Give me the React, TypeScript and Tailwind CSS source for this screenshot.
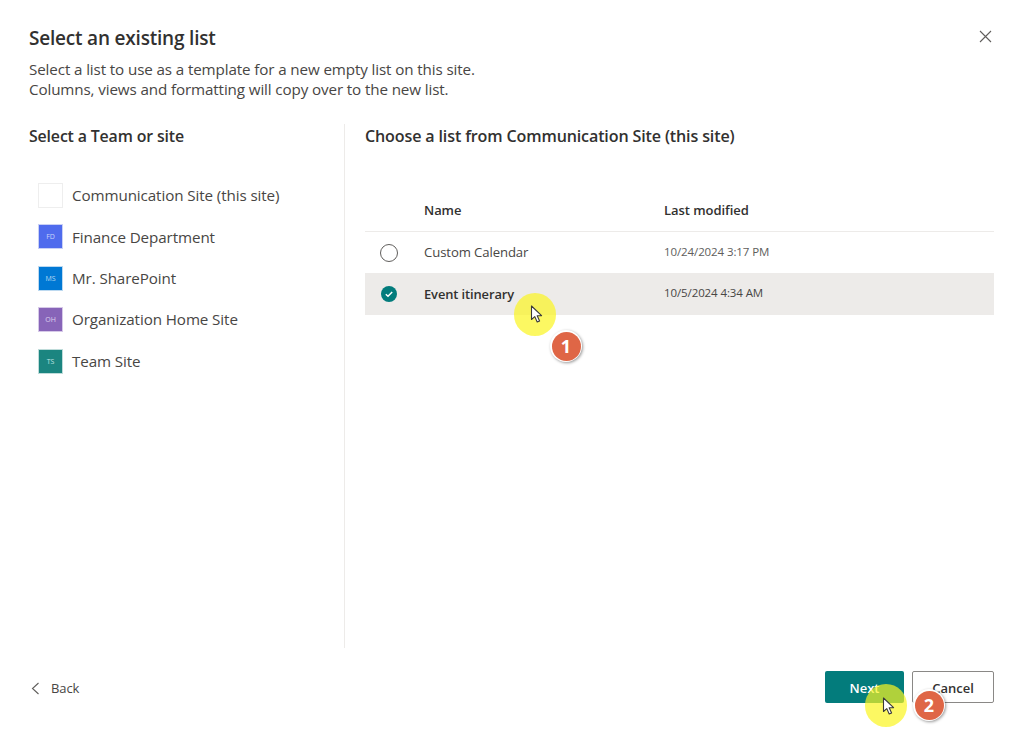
import React from "react";

const sites = [
  { name: "Communication Site (this site)", abbr: "", box: "bg-white border border-[#eeeeee]", text: "" },
  { name: "Finance Department", abbr: "FD", box: "bg-[#4f6bed] border border-[#c9d0f5]", text: "text-[#c9d3fb]" },
  { name: "Mr. SharePoint", abbr: "MS", box: "bg-[#0078d4] border border-[#bcd9f0]", text: "text-[#b5d8f3]" },
  { name: "Organization Home Site", abbr: "OH", box: "bg-[#8764b8] border border-[#d6c9e8]", text: "text-[#ddd0ee]" },
  { name: "Team Site", abbr: "TS", box: "bg-[#1b8580] border border-[#bfdcda]", text: "text-[#bfe3e0]" },
];

function Cursor() {
  return (
    <svg width="13" height="19" viewBox="0 0 13 19" className="block">
      <path d="M1.5 1 L1.5 14.5 L4.8 11.6 L7.2 17 L9.6 16 L7.2 10.8 L11.6 10.6 Z" fill="#ffffff" stroke="#3a3a3a" strokeWidth="1.1" strokeLinejoin="round" />
    </svg>
  );
}

function Badge({ n }: { n: string }) {
  return (
    <div className="w-[32px] h-[32px] rounded-full bg-white shadow-[1px_1px_3px_rgba(0,0,0,0.4)] flex items-center justify-center">
      <div className="w-[29px] h-[29px] rounded-full bg-[#df6646] flex items-center justify-center text-white text-[18px] font-bold font-['Open_Sans',sans-serif] leading-none">
        {n}
      </div>
    </div>
  );
}

export default function App() {
  return (
    <div className="relative w-[1024px] h-[731px] overflow-hidden bg-white flex flex-col font-['Open_Sans','Noto_Sans',sans-serif] text-[#323130]">
      <header className="relative h-[124px] shrink-0 pl-[29px] pt-[25px]">
        <h1 className="text-[19px] leading-[27px] font-semibold tracking-[-0.2px]">Select an existing list</h1>
        <p className="mt-[7px] text-[15.2px] leading-[20px] text-[#484644] tracking-[-0.12px]">
          Select a list to use as a template for a new empty list on this site.
          <br />
          Columns, views and formatting will copy over to the new list.
        </p>
        <button className="absolute left-[979px] top-[30px] text-[#605e5c]">
          <svg width="13" height="13" viewBox="0 0 13 13" className="block">
            <path d="M1 1 L12 12 M12 1 L1 12" stroke="#605e5c" strokeWidth="1.1" fill="none" />
          </svg>
        </button>
      </header>

      <main className="flex h-[524px] shrink-0">
        <section className="w-[316px] ml-[29px] shrink-0 border-r border-[#edebe9]">
          <h2 className="pt-[1px] text-[15.9px] leading-[22px] font-semibold tracking-[-0.15px]">Select a Team or site</h2>
          <ul className="mt-[36px] ml-[9px] flex flex-col gap-[16.45px]">
            {sites.map((s) => (
              <li key={s.name} className="flex items-center h-[25px]">
                <div className={`w-[25px] h-[25px] shrink-0 flex items-center justify-center ${s.box}`}>
                  <span className={`text-[7px] leading-none ${s.text}`}>{s.abbr}</span>
                </div>
                <span className="ml-[9px] text-[15.2px] tracking-[-0.1px] text-[#484644]">{s.name}</span>
              </li>
            ))}
          </ul>
        </section>

        <section className="ml-[20px] w-[629px] shrink-0">
          <h2 className="pt-[1px] text-[16.1px] leading-[22px] font-semibold tracking-[-0.15px]">
            Choose a list from Communication Site (this site)
          </h2>
          <div className="mt-[45px] h-[40px] pb-[1px] flex items-center border-b border-[#edebe9] text-[13px] font-semibold tracking-[-0.05px]">
            <span className="ml-[59px] w-[240px]">Name</span>
            <span>Last modified</span>
          </div>
          <div className="h-[41px] flex items-center">
            <span className="ml-[15px] w-[18px] h-[18px] rounded-full border border-[#605e5c] shrink-0" />
            <span className="ml-[26px] w-[240px] text-[13.15px] text-[#484644] tracking-[-0.1px]">Custom Calendar</span>
            <span className="pb-[2px] text-[11.5px] text-[#605e5c] tracking-[-0.1px]">10/24/2024 3:17 PM</span>
          </div>
          <div className="h-[42px] flex items-center bg-[#edebe9]">
            <span className="ml-[16px] w-[16px] h-[16px] rounded-full bg-[#037c7c] shrink-0 flex items-center justify-center">
              <svg width="10" height="10" viewBox="0 0 10 10" className="block">
                <path d="M1.8 5.2 L4 7.2 L8.2 3" stroke="#ffffff" strokeWidth="1.5" fill="none" />
              </svg>
            </span>
            <span className="ml-[27px] pt-[2px] w-[240px] text-[12.9px] font-semibold text-[#323130] tracking-[-0.1px]">Event itinerary</span>
            <span className="pb-[2px] text-[11.5px] text-[#484644] tracking-[-0.1px]">10/5/2024 4:34 AM</span>
          </div>
        </section>
      </main>

      <footer className="flex-1 flex items-start pl-[31px] pr-[30px] pt-[23px]">
        <div className="flex items-center h-[35px]">
          <svg width="9" height="13" viewBox="0 0 9 13" className="block">
            <path d="M7.5 1 L1.5 6.5 L7.5 12" stroke="#605e5c" strokeWidth="1.1" fill="none" />
          </svg>
          <span className="ml-[11px] text-[13px] text-[#484644] tracking-[-0.1px]">Back</span>
        </div>
        <div className="ml-auto flex gap-[8px]">
          <button className="w-[79px] h-[32px] pt-[3px] rounded-[2px] bg-[#037c7c] text-white text-[13px] font-semibold">Next</button>
          <button className="w-[82px] h-[32px] pt-[3px] rounded-[2px] bg-white border border-[#8a8886] text-[13px] font-semibold">Cancel</button>
        </div>
      </footer>

      <div className="absolute left-[514px] top-[293px] w-[42px] h-[43px] rounded-full bg-[#fbf51f]/70" />
      <div className="absolute left-[530px] top-[305px]"><Cursor /></div>
      <div className="absolute left-[550px] top-[330px]"><Badge n="1" /></div>

      <div className="absolute left-[865px] top-[684px] w-[42px] h-[43px] rounded-full bg-[#fbf51f]/70" />
      <div className="absolute left-[882px] top-[697px]"><Cursor /></div>
      <div className="absolute left-[913px] top-[689px]"><Badge n="2" /></div>
    </div>
  );
}
